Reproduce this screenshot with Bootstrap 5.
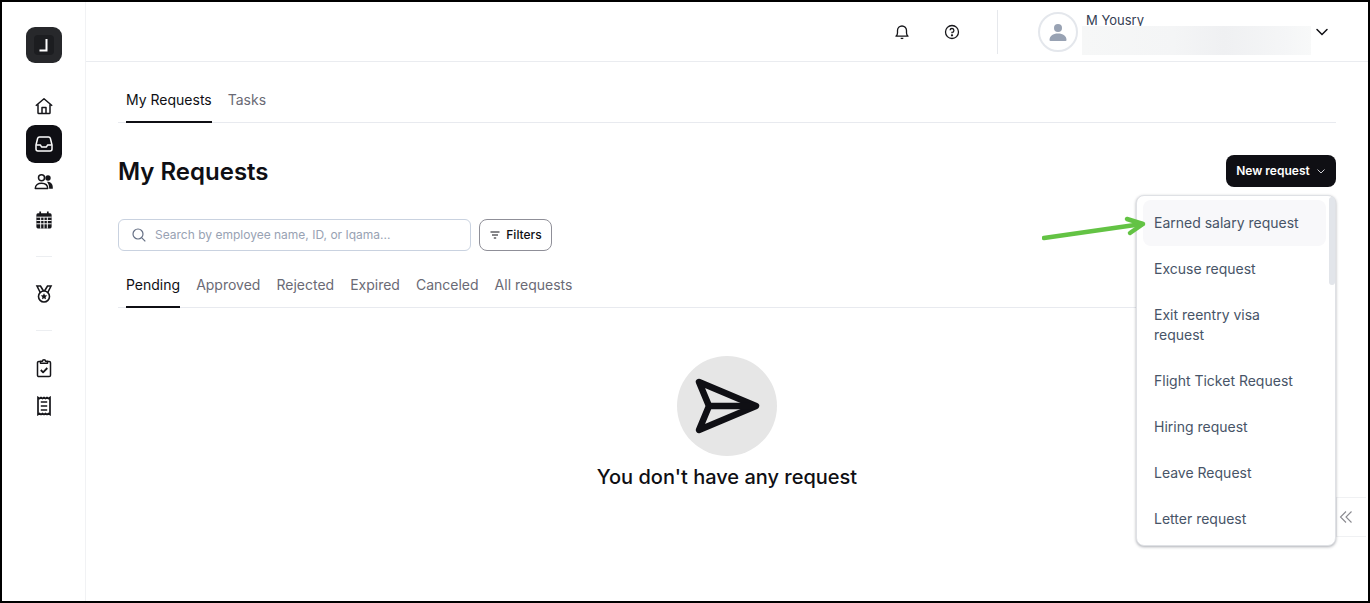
<!DOCTYPE html>
<html lang="en">
<head>
<meta charset="utf-8">
<title>My Requests</title>
<link href="https://cdn.jsdelivr.net/npm/bootstrap@5.3.0/dist/css/bootstrap.min.css" rel="stylesheet">
<style>
html,body{height:100%;margin:0}
body{font-family:Inter,"Liberation Sans",sans-serif;background:#fff;overflow:hidden;color:#0f0f14}
.shot{width:1370px;height:603px;border:2px solid #000;position:relative;overflow:hidden;display:flex}
.side{width:84px;flex:none;border-right:1px solid #f1f2f4;display:flex;flex-direction:column;align-items:center;padding-top:25px}
.logo-box{width:36px;height:36px;border-radius:9px;background:#27282b;display:flex;align-items:center;justify-content:center;margin-bottom:24px}
.logo-in{width:20px;height:20px;border-radius:4px;background:#1c1d20;color:#fff;display:flex;align-items:center;justify-content:center}
.side-ico{width:36px;height:38px;display:flex;align-items:center;justify-content:center;color:#16161a}
.side-ico.on{background:#0f0f14;color:#fff;border-radius:9px}
.side-sep{width:16px;height:1px;background:#eceef1;margin:17px 0}
.side-sep.sep-b{margin:18px 0}
.mainc{flex:1;min-width:0;display:flex;flex-direction:column}
.topb{height:60px;flex:none;border-bottom:1px solid #eaecf0;display:flex;align-items:center;justify-content:flex-end;position:relative}
.topi{color:#16161a;display:flex}
.topi.help-i{margin-left:34px}
.topi.chev-i{margin-left:237px;margin-right:39px}
.vsep{width:1px;height:44px;background:#e6e8ec;margin-left:37px;margin-right:40px}
.avatar{width:40px;height:40px;border-radius:50%;border:2px solid #e4e7ec;background:#fff;display:flex;align-items:center;justify-content:center;color:#98a2b3}
.uname{font-size:13px;line-height:16px;color:#344054;position:absolute;left:1000px;top:10px}
.redact{position:absolute;left:996px;top:24px;width:229px;height:29px;background:linear-gradient(90deg,#f6f7f7,#f4f5f6 40%,#eff0f2 62%,#f5f6f7 90%,#f8f9f9)}
.contentw{flex:1;padding:17px 32px 0 32px;min-height:0}
.tabx{display:flex;gap:16px;border-bottom:1px solid #e8eaef;padding:0 8px}
.tabx span{font-size:14px;line-height:20px;padding:11px 0 11px;color:#6a6a75;margin-bottom:-1px;border-bottom:2px solid transparent}
.tabx span.on{color:#0f0f14;border-bottom-color:#0f0f14}
.headr{display:flex;align-items:center;justify-content:space-between;margin-top:32px;height:32px}
.headr h1{font-size:24px;font-weight:600;line-height:32px;margin:2px 0 0;color:#0f0f14}
.newb{background:#0f0f14;color:#fff;border:0;border-radius:8px;height:32px;width:110px;font-size:12px;font-weight:600;display:flex;align-items:center;justify-content:center;gap:6px;padding:0}
.newb:hover{background:#0f0f14;color:#fff}
.filt{display:flex;gap:8px;margin-top:32px}
.srch{width:353px;height:32px;border:1px solid #c9d2e0;border-radius:6px;display:flex;align-items:center;padding:0 12px;gap:8px;color:#667085}
.srch input{border:0;outline:0;flex:1;font-size:12px;padding:0;min-width:0;box-shadow:none}
.srch input::placeholder{color:#98a2b3}
.filb{width:73px;height:32px;border:1px solid #8f8f98;border-radius:8px;background:#fff;font-size:12px;font-weight:500;color:#0f0f14;display:flex;align-items:center;justify-content:center;gap:5px;padding:0}
.subtabs{margin-top:13px}
.emptyb{display:flex;flex-direction:column;align-items:center;margin-top:48px}
.circ{width:100px;height:100px;border-radius:50%;background:#e6e6e6;display:flex;align-items:center;justify-content:center;color:#0f0f14}
.emptyb p{font-size:20px;line-height:28px;font-weight:500;margin:7px 0 0;color:#0f0f14}
.ddm{position:absolute;left:1134px;top:193px;width:200px;height:351px;background:#fff;border:1px solid #dfe1e5;border-radius:8px;box-shadow:0 1px 3px rgba(16,24,40,.35);padding:4px 9px 0 6px;z-index:5}
.ddi{display:block;font-size:14px;line-height:20px;padding:13px 20px 13px 11px;color:#475467;border-radius:8px;text-decoration:none}
.ddi.hv{background:#f8f8fa}
.sbar{position:absolute;right:0;top:1px;width:6px;height:88px;background:#e2e5ea;border-radius:3px}
.collh{position:absolute;left:1334px;top:495px;width:30px;height:40px;border:1px solid #f0f1f3;border-right:0;background:#fff;display:flex;align-items:center;padding-left:2px;color:#8a8a90}
.arrowg{position:absolute;left:1040px;top:214px;z-index:6}
</style>
</head>
<body>
<div class="shot">
  <aside class="side">
    <div class="logo-box"><div class="logo-in"><svg width="12" height="14" viewBox="0 0 12 14" fill="none" stroke="currentColor" stroke-width="2"><path d="M8.500 1v11.500H1.500"/></svg></div></div>
    <div class="side-ico"><svg width="20" height="20" viewBox="0 0 20 20" fill="none" stroke="currentColor" stroke-width="1.500" stroke-linejoin="round"><path d="M1.800 9.800 10 2.800l8.200 7M4 8.500v8.200a.8.800 0 0 0 .8.800h10.400a.8.800 0 0 0 .8-.8V8.500M8 17.500v-6h4v6"/></svg></div>
    <div class="side-ico on"><svg width="20" height="20" viewBox="0 0 20 20" fill="none" stroke="currentColor" stroke-width="1.500" stroke-linejoin="round"><path d="M5.500 3h9a2 2 0 0 1 1.900 1.500L18 11v4a2 2 0 0 1-2 2H4a2 2 0 0 1-2-2v-4l1.600-6.500A2 2 0 0 1 5.500 3z"/><path d="M2.300 11H6.500l1 2h5l1-2h4.200"/></svg></div>
    <div class="side-ico"><svg width="20" height="20" viewBox="0 0 20 20" fill="currentColor"><circle cx="7.500" cy="5.800" r="3" fill="none" stroke="currentColor" stroke-width="1.500"/><path d="M1.300 16.500c0-3.500 2.800-5.300 6.200-5.300s6.200 1.800 6.200 5.300z" fill="none" stroke="currentColor" stroke-width="1.500" stroke-linejoin="round"/><circle cx="14" cy="6" r="2.700"/><path d="M13 9.800c3.300 0 5.800 1.800 5.800 5.500v1.400h-3.600c0-3-.8-5-2.200-6.900z"/></svg></div>
    <div class="side-ico"><svg width="18" height="20" viewBox="0 0 18 21"><path fill="currentColor" d="M3 3.500h12A1.800 1.800 0 0 1 17 5.300v12.400a1.800 1.800 0 0 1-2 1.800H3a1.800 1.800 0 0 1-2-1.800V5.300a1.800 1.800 0 0 1 2-1.800z"/><path stroke="currentColor" stroke-width="1.800" d="M5 1.500v3M13 1.500v3"/><path stroke="#fff" stroke-width="1" d="M1 7.500h16M1 11h16M1 14.500h16M5.500 7.500v12M9 7.500v12M12.500 7.500v12"/></svg></div>
    <div class="side-sep"></div>
    <div class="side-ico"><svg width="20" height="20" viewBox="0 -1 20 20" fill="none" stroke="currentColor" stroke-width="1.600"><path d="M6.500 9 3 2h3.500l3 5M13.500 9 17 2h-3.500l-3 5"/><circle cx="10" cy="12.500" r="5.500"/><path fill="currentColor" stroke="none" d="m10 9.300 1 2 2.200.3-1.600 1.500.4 2.200-2-1-2 1 .4-2.200-1.600-1.500 2.200-.3z"/></svg></div>
    <div class="side-sep sep-b"></div>
    <div class="side-ico"><svg width="18" height="20" viewBox="0 0 18 20" fill="none" stroke="currentColor" stroke-width="1.500" stroke-linejoin="round"><path d="M5.500 3.500H3.800A1.300 1.300 0 0 0 2.500 4.800v12.400a1.300 1.300 0 0 0 1.300 1.300h10.400a1.300 1.300 0 0 0 1.300-1.300V4.800a1.300 1.300 0 0 0-1.300-1.300h-1.700"/><path d="M5.500 5.300V3.200h2a1.500 1.500 0 0 1 3 0h2v2.100z"/><path stroke-width="1.800" d="m5.800 12 2.300 2.300 4.200-4.300"/></svg></div>
    <div class="side-ico"><svg width="18" height="20" viewBox="0 0 18 20" fill="none" stroke="currentColor" stroke-width="1.700"><path d="M3 1.500v17l1.500-1 1.500 1 1.500-1 1.500 1 1.500-1 1.500 1 1.500-1 1.500 1v-17l-1.500 1-1.500-1-1.500 1L9 1.500l-1.500 1L6 1.500l-1.500 1z"/><path stroke-width="1.600" d="M5.800 6h6.400M5.800 10h6.400M5.800 14h6.400"/></svg></div>
  </aside>
  <div class="mainc">
    <header class="topb">
      <span class="topi"><svg width="16" height="16" viewBox="0 0 16 16" fill="none" stroke="currentColor" stroke-width="1.300" stroke-linejoin="round"><path d="M2 12.200c.9-.9 1.500-1.700 1.500-3.200V6.500a4.500 4.500 0 0 1 9 0V9c0 1.500.6 2.300 1.500 3.200z"/><path d="M6.700 14.400h2.600"/></svg></span>
      <span class="topi help-i"><svg width="16" height="16" viewBox="0 0 16 16" fill="none" stroke="currentColor" stroke-width="1.300"><circle cx="8" cy="8" r="6.500"/><path d="M6.100 6.300A1.900 1.900 0 1 1 8 8.300v.9"/><circle cx="8" cy="11.300" r=".5" fill="currentColor"/></svg></span>
      <div class="vsep"></div>
      <div class="avatar"><svg width="20" height="20" viewBox="0 0 20 20" fill="currentColor"><circle cx="10" cy="6" r="4"/><path d="M1.500 18c0-4 3.500-6.500 8.500-6.500s8.500 2.500 8.500 6.500a1 1 0 0 1-1 1H2.500a1 1 0 0 1-1-1z"/></svg></div>
      <span class="uname">M Yousry</span>
      <div class="redact"></div>
      <span class="topi chev-i"><svg width="14" height="14" viewBox="0 0 14 14" fill="none" stroke="#0f0f14" stroke-width="1.500" stroke-linecap="round"><path d="m2 4.500 5 5 5-5"/></svg></span>
    </header>
    <main class="contentw">
      <div class="tabx"><span class="on">My Requests</span><span>Tasks</span></div>
      <div class="headr">
        <h1>My Requests</h1>
        <button type="button" class="btn newb">New request <svg width="10" height="10" viewBox="0 0 10 10" fill="none" stroke="#d0d0d5" stroke-width="1"><path d="m1.500 3.500 3.500 3.500 3.500-3.500"/></svg></button>
      </div>
      <div class="filt">
        <label class="srch"><svg width="16" height="16" viewBox="0 0 16 16" fill="none" stroke="currentColor" stroke-width="1.200"><circle cx="7" cy="7" r="5"/><path d="m10.800 10.800 3.500 3.500"/></svg><input type="text" placeholder="Search by employee name, ID, or Iqama..."></label>
        <button type="button" class="btn filb"><svg width="12" height="12" viewBox="0 0 12 12" fill="none" stroke="#0f0f14" stroke-width="1"><path d="M1.500 3h9M3 6h6M4.800 9h2.400"/></svg>Filters</button>
      </div>
      <div class="tabx subtabs"><span class="on">Pending</span><span>Approved</span><span>Rejected</span><span>Expired</span><span>Canceled</span><span>All requests</span></div>
      <div class="emptyb">
        <div class="circ"><svg width="70" height="60" viewBox="0 0 70 60" fill="none" stroke="currentColor" stroke-width="6.500" stroke-linejoin="round" stroke-linecap="round"><path d="M7 6 64 30 7 54 17 30z"/><path d="M17 30h45"/></svg></div>
        <p>You don't have any request</p>
      </div>
    </main>
  </div>
  <div class="collh"><svg width="14" height="14" viewBox="0 0 14 14" fill="none" stroke="currentColor" stroke-width="1.100"><path d="M7 1.500 1.500 7 7 12.500M12.500 1.500 7 7l5.500 5.500"/></svg></div>
  <div class="ddm">
    <span class="sbar"></span>
    <a class="ddi hv">Earned salary request</a>
    <a class="ddi">Excuse request</a>
    <a class="ddi">Exit reentry visa request</a>
    <a class="ddi">Flight Ticket Request</a>
    <a class="ddi">Hiring request</a>
    <a class="ddi">Leave Request</a>
    <a class="ddi">Letter request</a>
  </div>
  <svg class="arrowg" width="106" height="26" viewBox="0 0 106 26" fill="none" stroke="#63c344" stroke-width="4.500" stroke-linecap="round" stroke-linejoin="round"><path d="M2 22 100 8"/><path d="M85 3 101 8 88 17"/></svg>
</div>
<script src="https://cdn.jsdelivr.net/npm/bootstrap@5.3.0/dist/js/bootstrap.bundle.min.js"></script>
</body>
</html>
